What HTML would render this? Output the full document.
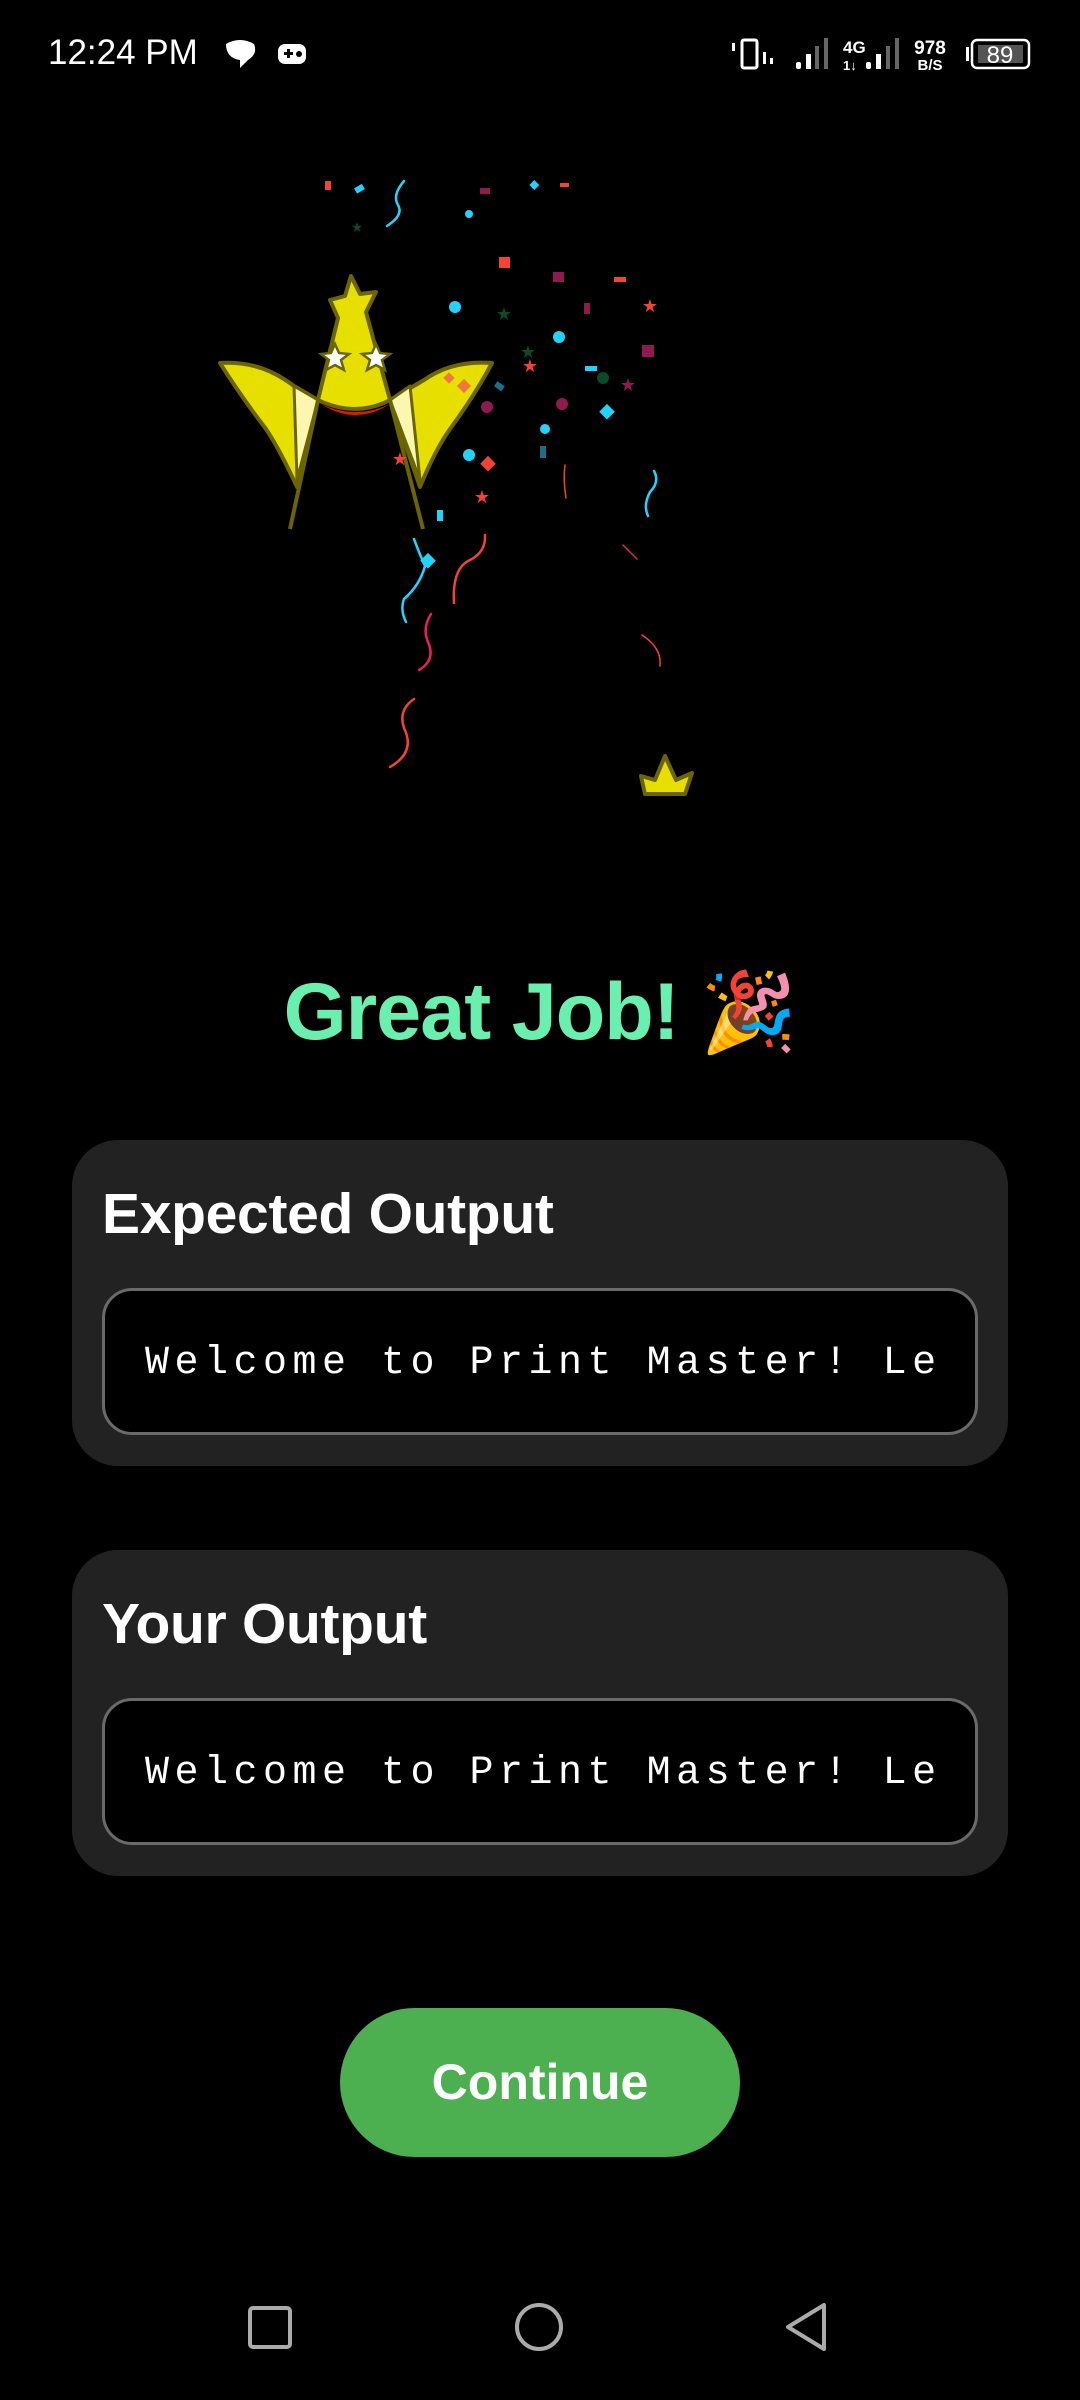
<!DOCTYPE html>
<html><head><meta charset="utf-8"><style>
html,body{margin:0;padding:0;background:#000;}
body{width:1080px;height:2400px;position:relative;overflow:hidden;font-family:"Liberation Sans",sans-serif;}
.abs{position:absolute;}
.card{position:absolute;left:72px;width:936px;height:326px;background:#222;border-radius:46px;}
.card h2{position:absolute;left:30px;margin:0;color:#fff;font-size:57px;font-weight:bold;letter-spacing:-0.3px;}
.box{position:absolute;left:30px;width:870px;height:141px;border:3px solid #6a6a6a;border-radius:30px;background:#000;overflow:hidden;}
.box span{position:absolute;left:40px;top:50px;color:#fff;font-family:"Liberation Mono",monospace;font-size:40px;letter-spacing:5.5px;white-space:nowrap;width:792px;overflow:hidden;display:block;}
</style></head><body>
<!-- status bar -->
<div class="abs" style="left:48px;top:33px;color:#fff;font-size:35px;">12:24 PM</div>
<svg class="abs" style="left:0;top:0" width="1080" height="100">
<path d="M226 44 q14-8 28 0 q4 10-6 16 l-8 8 l0-8 q-14-2-14-16z" fill="#fff"/>
<rect x="278" y="44" width="28" height="20" rx="7" fill="#fff"/>
<rect x="284" y="52" width="9" height="3" fill="#000"/><rect x="287" y="49" width="3" height="9" fill="#000"/><circle cx="299" cy="54" r="3" fill="#000"/>
<rect x="732" y="43" width="3" height="8" fill="#fff"/>
<rect x="742" y="40" width="15" height="28" rx="2" fill="none" stroke="#fff" stroke-width="3"/>
<rect x="763" y="52" width="3" height="12" fill="#fff"/><rect x="770" y="58" width="3" height="6" fill="#fff"/>
<rect x="796" y="62" width="5" height="7" rx="2" fill="#fff"/><rect x="806" y="54" width="5" height="15" fill="#fff"/><rect x="815" y="46" width="4" height="23" fill="#666"/><rect x="824" y="38" width="4" height="31" fill="#666"/>
<text x="843" y="53" fill="#fff" font-size="17" font-weight="bold" font-family="Liberation Sans">4G</text>
<text x="843" y="70" fill="#fff" font-size="13" font-weight="bold" font-family="Liberation Sans">1↓</text>
<rect x="866" y="62" width="5" height="7" rx="2" fill="#fff"/><rect x="876" y="54" width="5" height="15" fill="#fff"/><rect x="886" y="46" width="4" height="23" fill="#666"/><rect x="895" y="38" width="4" height="31" fill="#666"/>
<text x="930" y="54" fill="#fff" font-size="19" font-weight="bold" text-anchor="middle" font-family="Liberation Sans">978</text>
<text x="930" y="70" fill="#fff" font-size="15" font-weight="bold" text-anchor="middle" font-family="Liberation Sans">B/S</text>
<rect x="966" y="47" width="3" height="14" fill="#fff"/>
<rect x="972" y="40" width="57" height="28" rx="5" fill="none" stroke="#fff" stroke-width="2.5"/>
<rect x="978" y="45" width="45" height="18" fill="#555"/>
<text x="1000" y="63" fill="#fff" font-size="24" text-anchor="middle" font-family="Liberation Sans">89</text>
</svg>
<!-- hero -->
<svg class="abs" style="left:0;top:0" width="1080" height="820">
<g stroke="#6b6500" stroke-width="4" stroke-linejoin="round">
<path d="M318 400 L338 318 L330 300 L345 296 L351 276 L360 294 L376 292 L366 312 L390 400 Q356 418 318 400Z" fill="#e6df00"/>
<path d="M220 363 Q260 360 294 386 L318 400 L297 487 Q280 450 266 429 Q240 395 220 363Z" fill="#e6df00"/>
<path d="M294 386 L318 400 L297 480Z" fill="#fbf7b0" stroke-width="3"/>
<path d="M492 363 Q452 360 424 380 L390 400 L420 487 Q435 450 450 429 Q475 395 492 363Z" fill="#e6df00"/>
<path d="M410 386 L390 400 L420 480Z" fill="#fbf7b0" stroke-width="3"/>
<path d="M318 400 L290 529 M390 400 L423 529" fill="none"/>
<path d="M645 794 L641 776 L655 780 L665 756 L676 780 L692 773 L685 794Z" fill="#e6df00"/>
</g>
<path d="M321 404 Q356 420 390 404 Q356 426 321 404Z" fill="#e01b00"/>
<g fill="#fff" stroke="#6b6500" stroke-width="2.5">
<path d="M335 344 l4 9 10 1 -8 6 3 10 -9 -5 -9 5 3 -10 -8 -6 10 -1z"/>
<path d="M376 344 l4 9 10 1 -8 6 3 10 -9 -5 -9 5 3 -10 -8 -6 10 -1z"/>
</g>
<g>
<rect x="325" y="181" width="6" height="9" fill="#f44336"/><rect x="355" y="186" width="9" height="6" fill="#21d4fd" transform="rotate(-30 359 189)"/>
<rect x="480" y="188" width="10" height="6" fill="#8e1a50"/><rect x="531" y="182" width="7" height="7" fill="#21d4fd" transform="rotate(45 535 185)"/>
<rect x="560" y="183" width="9" height="4" fill="#f44336"/><rect x="499" y="257" width="11" height="11" fill="#f44336"/>
<rect x="553" y="272" width="11" height="10" fill="#8e1a50"/><rect x="614" y="277" width="12" height="5" fill="#f44336"/>
<rect x="584" y="303" width="6" height="11" fill="#8e1a50"/><rect x="642" y="345" width="12" height="12" fill="#8e1a50"/>
<rect x="585" y="366" width="12" height="5" fill="#21d4fd"/><rect x="495" y="383" width="9" height="6" fill="#1a6e8e" transform="rotate(35 499 386)"/>
<rect x="602" y="406" width="11" height="11" fill="#21d4fd" transform="rotate(45 607 411)"/><rect x="540" y="446" width="6" height="12" fill="#1a6e8e"/>
<rect x="483" y="458" width="11" height="11" fill="#f44336" transform="rotate(45 488 463)"/><rect x="437" y="510" width="6" height="11" fill="#21d4fd"/>
<rect x="423" y="555" width="11" height="11" fill="#21d4fd" transform="rotate(45 428 560)"/><rect x="459" y="381" width="10" height="10" fill="#f07840" transform="rotate(45 464 386)"/>
<rect x="445" y="374" width="8" height="8" fill="#f07840" transform="rotate(45 449 378)"/>
<circle cx="469" cy="214" r="4" fill="#21d4fd"/><circle cx="455" cy="307" r="6" fill="#21d4fd"/><circle cx="559" cy="337" r="6" fill="#21d4fd"/>
<circle cx="603" cy="378" r="6" fill="#0a4a2a"/><circle cx="487" cy="407" r="6" fill="#8e1a50"/><circle cx="562" cy="404" r="6" fill="#8e1a50"/>
<circle cx="545" cy="429" r="5" fill="#21d4fd"/><circle cx="469" cy="455" r="6" fill="#21d4fd"/>
<g font-size="18" text-anchor="middle" font-family="DejaVu Sans">
<text x="504" y="320" fill="#0a4a2a">★</text><text x="650" y="312" fill="#f44336">★</text><text x="528" y="358" fill="#0a4a2a">★</text>
<text x="530" y="372" fill="#f44336">★</text><text x="628" y="391" fill="#8e1a50">★</text><text x="482" y="503" fill="#f44336">★</text>
<text x="400" y="465" fill="#f44336">★</text><text x="357" y="232" fill="#0a4a2a" font-size="14">★</text>
</g>
<g fill="none" stroke-width="2.5" stroke-linecap="round">
<path d="M404 181 Q392 195 398 205 T387 226" stroke="#21d4fd"/>
<path d="M414 539 Q420 555 425 566 Q420 585 404 599 Q400 610 406 622" stroke="#21d4fd"/>
<path d="M485 535 Q486 552 470 560 Q452 568 454 603" stroke="#f44336"/>
<path d="M431 614 Q422 628 428 642 Q436 660 419 670" stroke="#e91e63"/>
<path d="M414 699 Q398 710 404 728 Q416 752 390 767" stroke="#f44336"/>
<path d="M565 465 Q563 480 566 498" stroke="#f44336" stroke-width="1.5"/>
<path d="M654 471 Q660 482 650 492 Q643 505 648 516" stroke="#21d4fd"/>
<path d="M623 545 L637 559" stroke="#e91e63" stroke-width="1.5"/>
<path d="M642 635 Q662 648 660 666" stroke="#f44336" stroke-width="1.5"/>
</g>
</g>
</svg>
<!-- title -->
<div class="abs" style="left:0;width:1080px;top:966px;text-align:center;font-size:81px;font-weight:bold;color:#69f0ae;letter-spacing:-1px;">Great Job! <span style="font-family:'Noto Color Emoji','DejaVu Sans',sans-serif;font-size:78px;">🎉</span></div>
<div class="card" style="top:1140px;"><h2 style="top:41px;">Expected Output</h2><div class="box" style="top:148px;"><span>Welcome to Print Master! Let's</span></div></div>
<div class="card" style="top:1550px;"><h2 style="top:41px;">Your Output</h2><div class="box" style="top:148px;"><span>Welcome to Print Master! Let's</span></div></div>
<div class="abs" style="left:340px;top:2008px;width:400px;height:149px;border-radius:75px;background:#4caf50;color:#fff;font-size:50px;font-weight:bold;text-align:center;line-height:149px;">Continue</div>
<svg class="abs" style="left:0;top:2280px" width="1080" height="100">
<rect x="250" y="28" width="40" height="39" rx="3" fill="none" stroke="#aaa" stroke-width="4"/>
<circle cx="539" cy="47" r="22" fill="none" stroke="#aaa" stroke-width="4"/>
<path d="M824 25 L824 69 L788 47Z" fill="none" stroke="#aaa" stroke-width="4" stroke-linejoin="round"/>
</svg>
</body></html>
